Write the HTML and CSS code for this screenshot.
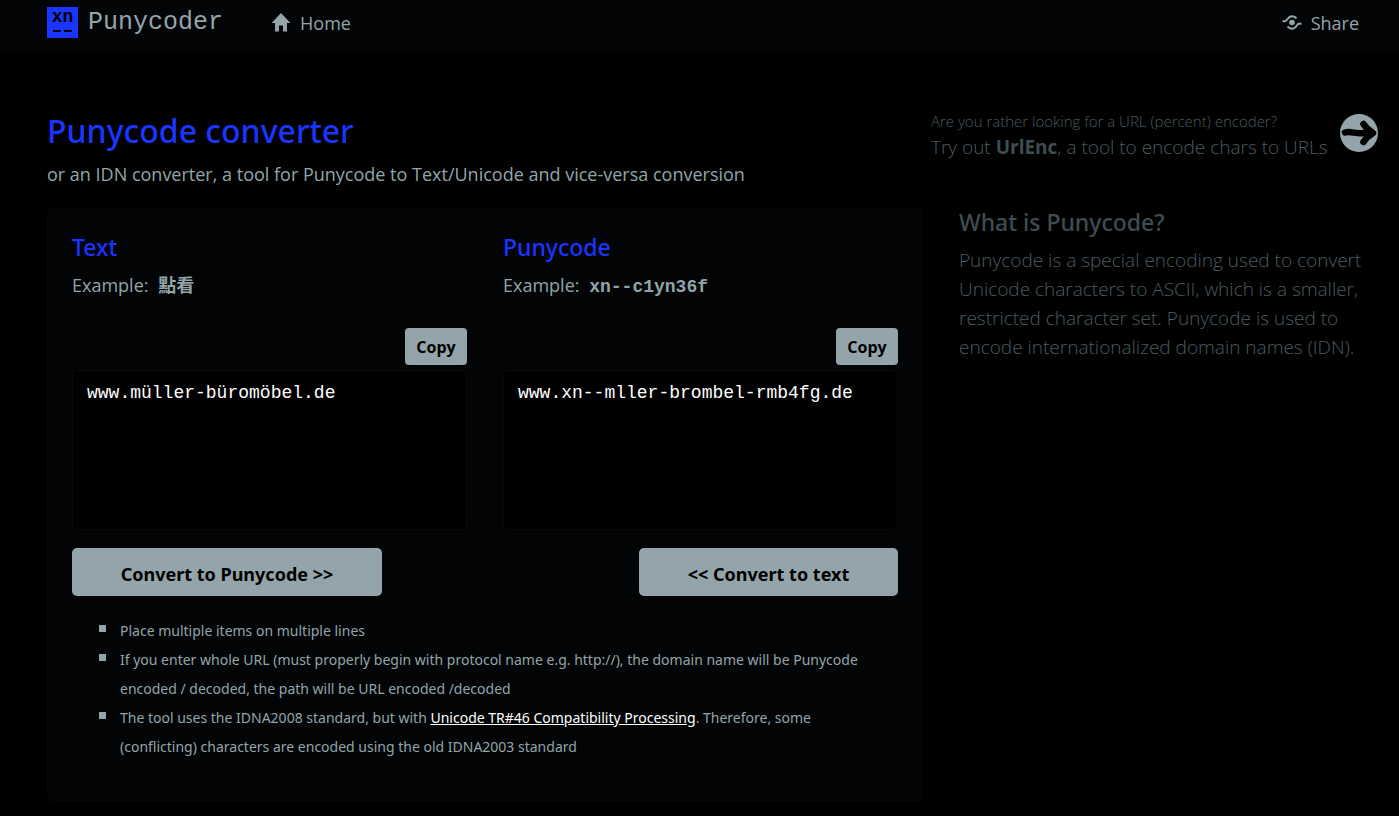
FILE: index.html
```html
<!DOCTYPE html>
<html lang="en">
<head>
<meta charset="utf-8">
<meta name="viewport" content="width=device-width, initial-scale=1">
<title>Punycode converter</title>
<link rel="stylesheet" href="styles.css">
</head>
<body>
<header class="navbar">
  <a class="brand" href="#">
    <span class="brand-mark"><span class="brand-xn">xn</span><span class="brand-dashes"><i></i><i></i></span></span>
    <span class="brand-name">Punycoder</span>
  </a>
  <a class="nav-link" href="#">
    <svg class="nav-icon" viewBox="0 0 20 20" aria-hidden="true"><path d="M10 0L19.5 10H16V18.500H12V12.500H8V18.500H4V10H0.500Z" fill="currentColor"/></svg>
    Home
  </a>
  <a class="nav-link nav-share" href="#">
    <svg class="nav-icon" viewBox="0 0 20 20" aria-hidden="true"><circle cx="10" cy="9.500" r="2.800" fill="currentColor"/><path d="M0.500 8.200H3C5.500 8.200 5.500 3.300 10 3.300C12 3.300 13.500 4.100 14.300 5.600M19.500 10.800H17C14.500 10.800 14.500 15.700 10 15.700C8 15.700 6.500 14.900 5.700 13.400" fill="none" stroke="currentColor" stroke-width="2"/></svg>
    Share
  </a>
</header>
<main class="page">
  <section class="intro">
    <h1>Punycode converter</h1>
    <p>or an IDN converter, a tool for Punycode to Text/Unicode and vice-versa conversion</p>
  </section>
  <a class="promo" href="#">
    <span class="promo-text">
      <small>Are you rather looking for a URL (percent) encoder?</small>
      <span>Try out <strong>UrlEnc</strong>, a tool to encode chars to URLs</span>
    </span>
    <svg class="promo-icon" viewBox="0 0 38 38" aria-hidden="true"><circle cx="19" cy="19" r="19" fill="#93a5aa"/><path d="M5 18.500C11 16.500 16 20.500 24 19H32" fill="none" stroke="#000" stroke-width="6.500" stroke-linecap="round"/><path d="M23.500 10C26 14 29 16.500 33 19C29 21.500 26 24 23.500 28" fill="none" stroke="#000" stroke-width="6.500" stroke-linecap="round" stroke-linejoin="round"/></svg>
  </a>
  <form class="panel">
    <div class="fields">
      <div class="field">
        <h2><label for="text">Text</label></h2>
        <p>Example: <b class="example">點看</b></p>
        <button type="button" class="copy">Copy</button>
        <textarea id="text" spellcheck="false">www.müller-büromöbel.de</textarea>
      </div>
      <div class="field">
        <h2><label for="puny">Punycode</label></h2>
        <p>Example: <code class="example">xn--c1yn36f</code></p>
        <button type="button" class="copy">Copy</button>
        <textarea id="puny" spellcheck="false">www.xn--mller-brombel-rmb4fg.de</textarea>
      </div>
    </div>
    <div class="actions">
      <button type="button" class="convert to-puny">Convert to Punycode &gt;&gt;</button>
      <button type="button" class="convert to-text">&lt;&lt; Convert to text</button>
    </div>
    <ul class="notes">
      <li>Place multiple items on multiple lines</li>
      <li>If you enter whole URL (must properly begin with protocol name e.g. http://), the domain name will be Punycode encoded / decoded, the path will be URL encoded /decoded</li>
      <li>The tool uses the IDNA2008 standard, but with <a href="#">Unicode TR#46 Compatibility Processing</a>. Therefore, some (conflicting) characters are encoded using the old IDNA2003 standard</li>
    </ul>
  </form>
  <aside class="about">
    <h2>What is Punycode?</h2>
    <p>Punycode is a special encoding used to convert Unicode characters to ASCII, which is a smaller, restricted character set. Punycode is used to encode internationalized domain names (IDN).</p>
  </aside>
</main>
</body>
</html>
```
FILE: styles.css
```css
* { box-sizing: border-box; }
body {
  margin: 0;
  background: #000;
  color: #93a5aa;
  font: 18px/29px "Open Sans", "Noto Sans", "Noto Sans CJK TC", sans-serif;
}
h1, h2, p, ul { margin: 0; }
a { color: inherit; text-decoration: none; }

.navbar {
  display: flex;
  align-items: center;
  height: 52px;
  padding: 0 40px 6px 47px;
  background: #030406;
}
.brand { display: flex; align-items: center; gap: 10px; margin-right: 48px; padding-bottom: 1px; }
.brand-mark {
  display: flex;
  flex-direction: column;
  align-items: center;
  justify-content: space-between;
  width: 31px;
  height: 31px;
  padding-bottom: 6px;
  background: #1a35ff;
  color: #000;
}
.brand-xn { font: bold 18px/20px "Liberation Mono", monospace; }
.brand-dashes { display: flex; gap: 3px; }
.brand-dashes i { width: 8px; height: 2px; background: #000; }
.brand-name { font: 25px/31px "Liberation Mono", monospace; }
.nav-link { display: flex; align-items: center; gap: 9px; }
.nav-share { margin-left: auto; }
.nav-icon { width: 20px; height: 20px; }

.page {
  display: grid;
  grid-template-columns: minmax(0, 876fr) minmax(0, 447fr);
  column-gap: 8px;
  padding: 57px 21px 14px 47px;
}
h1, h2 { font-family: "Noto Sans", sans-serif; font-weight: 500; }
h1 {
  color: #1a35ff;
  font-size: 32px;
  line-height: 44px;
}
.intro p { margin-top: 7px; margin-bottom: 18px; }

.promo {
  display: flex;
  align-items: flex-start;
  justify-content: space-between;
  color: #4c5b61;
}
.promo-text {
  display: flex;
  flex-direction: column;
  font-size: 19px;
  line-height: 28px;
  font-weight: 300;
  white-space: nowrap;
}
.promo strong { font-weight: 700; color: #3f4d52; }
.promo small { font-size: 15px; line-height: 24px; }
.promo-icon { width: 38px; height: 38px; margin-top: 5px; flex: none; }

.panel {
  padding: 24px 25px 41px;
  border-radius: 5px;
  background: #030406;
}
.fields { display: grid; grid-template-columns: 1fr 1fr; gap: 36px; }
.field { display: flex; flex-direction: column; }
h2 { font-size: 23px; line-height: 32px; }
.field h2 { color: #1a35ff; margin-bottom: 8px; }
.example { margin-left: 5px; font-weight: bold; }
code.example { font-family: "Liberation Mono", monospace; }
.field p { height: 29px; }
button {
  border: 0;
  border-radius: 4px;
  background: #93a5aa;
  color: #000;
  font: bold 16px/24px "Open Sans", sans-serif;
}
.copy { align-self: flex-end; width: 62px; height: 37px; margin: 28px 0 5px; padding: 0; }
textarea {
  height: 160px;
  padding: 8px 14px;
  border: 1px solid #080a0c;
  border-radius: 4px;
  background: #000;
  color: #fff;
  font: 18px/29px "Liberation Mono", monospace;
  resize: none;
}
.actions { display: flex; justify-content: space-between; margin-top: 18px; }
.convert { height: 48px; padding-top: 4px; border-radius: 5px; font: bold 18px/26px "Noto Sans", sans-serif; }
.to-puny { flex: 0 1 310px; }
.to-text { flex: 0 1 259px; }

.notes {
  margin-top: 20px;
  padding: 0 12px 0 48px;
  font-family: "Noto Sans", sans-serif;
  font-size: 14px;
  list-style: none;
}
.notes li { position: relative; }
.notes li::before {
  content: "";
  position: absolute;
  left: -21px;
  top: 9px;
  width: 7px;
  height: 7px;
  background: #93a5aa;
}
.notes a { color: #fff; text-decoration: underline; }

.about { padding: 0 0 0 28px; color: #4c5b61; }
.about h2 { line-height: 30px; color: #3f4d52; }
.about p { margin-top: 9px; font-size: 19px; font-weight: 300; }

@media (max-width: 900px) {
  .page { grid-template-columns: minmax(0, 1fr); row-gap: 20px; padding-left: 20px; }
  .promo-text { white-space: normal; }
}
```
